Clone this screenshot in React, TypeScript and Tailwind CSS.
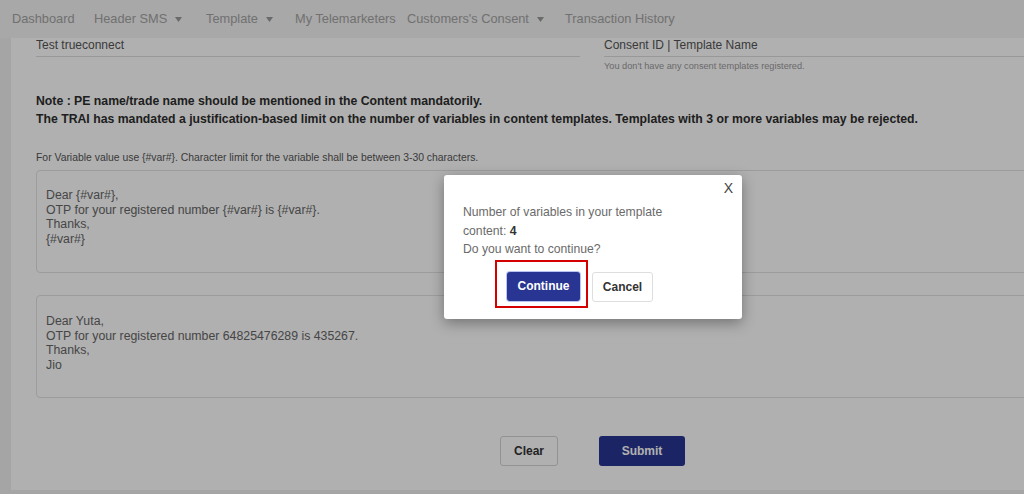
import React from 'react';

const navItems = [
  { label: 'Dashboard', w: 'w-[82px]', caret: false },
  { label: 'Header SMS', w: 'w-[112px]', caret: true },
  { label: 'Template', w: 'w-[89px]', caret: true },
  { label: 'My Telemarketers', w: 'w-[112px]', caret: false },
  { label: "Customers's Consent", w: 'w-[158px]', caret: true },
  { label: 'Transaction History', w: 'w-[120px]', caret: false },
];

const Caret: React.FC = () => (
  <svg width="7" height="5" viewBox="0 0 7 5" className="ml-[8px] inline-block">
    <path d="M0 0 L7 0 L3.5 5 Z" fill="#9a9a9a" />
  </svg>
);

const App: React.FC = () => {
  return (
    <div className="relative w-[1024px] h-[494px] overflow-hidden bg-[#efefef] font-['Liberation_Sans',Arial,sans-serif]">
      {/* Top navigation */}
      <nav className="h-[38px] bg-[#f3f3f3] flex items-center pl-[12px] text-[12.8px] text-[#a4a4a4]">
        {navItems.map((item) => (
          <div key={item.label} className={`${item.w} shrink-0 flex items-center whitespace-nowrap`}>
            {item.label}
            {item.caret && <Caret />}
          </div>
        ))}
      </nav>

      {/* Main card */}
      <div className="ml-[11px] w-[1040px] bg-white pl-[25px] pb-[24px]">
        {/* Header / consent row */}
        <div className="flex">
          <div className="w-[544px] h-[19px] border-b border-[#dcdcdc] text-[12px] leading-[14px] text-[#555]">
            Test trueconnect
          </div>
          <div className="ml-[24px] flex-1">
            <div className="h-[19px] border-b border-[#dcdcdc] text-[12px] leading-[14px] text-[#555]">
              Consent ID | Template Name
            </div>
            <div className="mt-[4px] text-[9.2px] leading-[10px] text-[#999]">
              You don't have any consent templates registered.
            </div>
          </div>
        </div>

        {/* Notes */}
        <div className="mt-[21px] text-[12.25px] leading-[18px] font-bold text-[#2d2d2d]">
          <p>Note : PE name/trade name should be mentioned in the Content mandatorily.</p>
          <p>The TRAI has mandated a justification-based limit on the number of variables in content templates. Templates with 3 or more variables may be rejected.</p>
        </div>

        <p className="mt-[24px] text-[10.4px] leading-[12px] text-[#555]">
          For Variable value use {'{#var#}'}. Character limit for the variable shall be between 3-30 characters.
        </p>

        {/* Template textarea */}
        <div className="mt-[6px] h-[103px] border border-[#e2e2e2] rounded-[4px] pl-[9px] pt-[17px] text-[12.3px] leading-[14.5px] text-[#666]">
          <p>Dear {'{#var#}'},</p>
          <p>OTP for your registered number {'{#var#}'} is {'{#var#}'}.</p>
          <p>Thanks,</p>
          <p>{'{#var#}'}</p>
        </div>

        {/* Preview textarea */}
        <div className="mt-[22px] h-[103px] border border-[#e2e2e2] rounded-[4px] pl-[9px] pt-[18px] text-[12.3px] leading-[14.5px] text-[#666]">
          <p>Dear Yuta,</p>
          <p>OTP for your registered number 64825476289 is 435267.</p>
          <p>Thanks,</p>
          <p>Jio</p>
        </div>

        {/* Actions */}
        <div className="mt-[38px] flex pl-[464px] gap-[41px]">
          <button className="w-[58px] h-[30px] border border-[#d4d4d4] rounded-[3px] bg-white text-[12px] font-bold text-[#333]">
            Clear
          </button>
          <button className="w-[86px] h-[30px] rounded-[3px] bg-[#283593] text-[12px] font-bold text-white">
            Submit
          </button>
        </div>
      </div>

      {/* Dim overlay */}
      <div className="absolute inset-0 bg-black/[0.31]" />

      {/* Modal */}
      <div className="absolute left-[444px] top-[175px] w-[298px] h-[144px] bg-white rounded-[3px] shadow-[0_4px_14px_rgba(0,0,0,0.35)]">
        <span className="absolute right-[9px] top-[5px] text-[14px] leading-[16px] text-[#444]">X</span>
        <div className="pl-[19px] pt-[28px] text-[12.2px] leading-[18.5px] text-[#6a6a6a]">
          <p>Number of variables in your template</p>
          <p>
            content: <span className="font-bold text-[#333]">4</span>
          </p>
          <p>Do you want to continue?</p>
        </div>
        <div className="flex items-start pl-[51px] mt-[1px]">
          <div className="border-2 border-[#d40000] pt-[10px] pb-[5px] pl-[10px] pr-[6px]">
            <button className="w-[73px] h-[29px] rounded-[3px] bg-[#283593] ring-1 ring-[#b9c4f0] text-[12px] font-bold text-white">
              Continue
            </button>
          </div>
          <button className="ml-[4px] mt-[12px] w-[61px] h-[30px] rounded-[3px] border border-[#dedede] bg-white text-[12px] font-bold text-[#333]">
            Cancel
          </button>
        </div>
      </div>
    </div>
  );
};

export default App;
